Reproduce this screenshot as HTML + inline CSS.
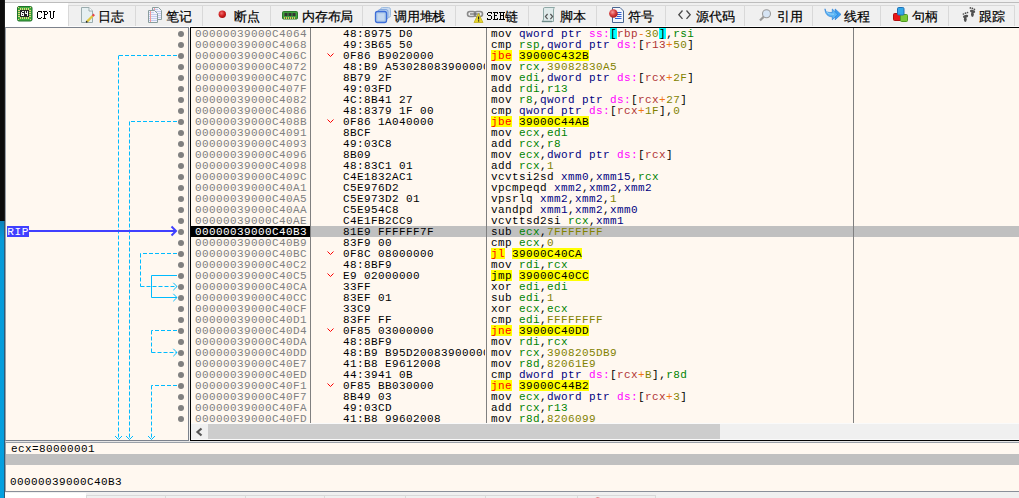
<!DOCTYPE html>
<html><head><meta charset="utf-8"><style>
*{margin:0;padding:0;box-sizing:border-box}
html,body{width:1019px;height:498px;overflow:hidden;background:#f0f0f0;position:relative;font-family:"Liberation Sans",sans-serif}
.a{position:absolute}
#strip1{position:absolute;left:0;top:0;width:5px;height:221px;background:#0c0c0c;border-right:1px solid #1c1c1c}
#strip2{position:absolute;left:0;top:221px;width:5px;height:277px;background:linear-gradient(#0c80b8,#069ad8 18px,#04a0e0);border-right:1px solid #2a5a78}
.tl{font-size:12.6px;line-height:14px;letter-spacing:-0.2px;color:#000;white-space:nowrap;font-weight:400;-webkit-text-stroke:0.2px #000}
.tab{position:absolute;top:3px;height:24px;background:#f0f0f0;border-right:1px solid #d9d9d9;font-size:12px;color:#000;white-space:nowrap}
.tab.act{background:#fff}
.tab span{position:absolute;top:5px;line-height:14px}
#side{position:absolute;left:5px;top:27px;width:184px;height:414px;background:#fff8f0;border:1px solid #7c828c;border-left-color:#9aa0a8}
#dis{position:absolute;left:190px;top:27px;width:829px;height:414px;background:#fff8f0;border-top:1px solid #000;border-left:1px solid #000;border-bottom:1px solid #000}
.mono{font-family:"Liberation Mono",monospace;font-size:11px;line-height:11px;letter-spacing:0.4px}
.addr,.byt,.dis{position:absolute;height:11px;font-family:"Liberation Mono",monospace;font-size:11px;line-height:11px;letter-spacing:0.4px;white-space:pre}
.addr{left:195px;color:#808080}
.addr.cip{left:191px;width:119px;padding-left:4px;background:#000;color:#fff}
.byt{left:343px;color:#000;width:142px;clip-path:inset(-4px 0 -4px 0)}
.dis{left:491px;color:#000}
.sel{position:absolute;left:191px;width:828px;height:11px;background:#c0c0c0}
.chev{position:absolute;left:326px}
.dot{position:absolute;left:178.4px;width:6px;height:6px;border-radius:50%;background:#808080}
.colsep{position:absolute;top:28px;width:1px;height:395px;background:#808080}
.m{color:#000} .s{color:#000080} .g{color:#ff00ff} .sb{color:#000} .k{color:#000}
.b{color:#b03434} .o{color:#f27711} .v{color:#828200} .c{color:#000} .r{color:#008300} .x{color:#000080}
.cj{color:#ff0000} .uj{color:#000} .ja{color:#000} .hl{position:absolute;height:11px}
#hscroll{position:absolute;left:191px;top:423px;width:828px;height:17px;background:#f0f0f0;border-top:1px solid #fafafa;border-bottom:1px solid #fafafa}
#thumb{position:absolute;left:17px;top:0;width:512px;height:15px;background:#cdcdcd}
#info1{position:absolute;left:5px;top:441px;width:1014px;height:50px;background:#fff8f0;border-left:1px solid #9aa0a8;border-top:1px solid #e6e6e6}
#info1line{position:absolute;left:5px;top:442px;width:1014px;height:1px;background:#9aa0a8}
#band{position:absolute;left:6px;top:454px;width:1013px;height:11px;background:#c0c0c0}
#botline{position:absolute;left:5px;top:491px;width:1014px;height:1px;background:#8a8f99}
</style></head><body>
<div id="strip1"></div><div id="strip2"></div>
<div class="a" style="left:5px;top:2px;width:1014px;height:1px;background:#bdbdbd"></div><div class="a" style="left:5px;top:3px;width:63px;height:24px;background:#fff"></div><div class="a" style="left:68px;top:5px;width:68px;height:21px;background:#f0f0f0;border:1px solid #d9d9d9;border-bottom:0"></div><div class="a" style="left:135px;top:5px;width:68px;height:21px;background:#f0f0f0;border:1px solid #d9d9d9;border-bottom:0"></div><div class="a" style="left:202px;top:5px;width:69px;height:21px;background:#f0f0f0;border:1px solid #d9d9d9;border-bottom:0"></div><div class="a" style="left:270px;top:5px;width:93px;height:21px;background:#f0f0f0;border:1px solid #d9d9d9;border-bottom:0"></div><div class="a" style="left:362px;top:5px;width:94px;height:21px;background:#f0f0f0;border:1px solid #d9d9d9;border-bottom:0"></div><div class="a" style="left:455px;top:5px;width:74px;height:21px;background:#f0f0f0;border:1px solid #d9d9d9;border-bottom:0"></div><div class="a" style="left:528px;top:5px;width:69px;height:21px;background:#f0f0f0;border:1px solid #d9d9d9;border-bottom:0"></div><div class="a" style="left:596px;top:5px;width:70px;height:21px;background:#f0f0f0;border:1px solid #d9d9d9;border-bottom:0"></div><div class="a" style="left:665px;top:5px;width:80px;height:21px;background:#f0f0f0;border:1px solid #d9d9d9;border-bottom:0"></div><div class="a" style="left:744px;top:5px;width:69px;height:21px;background:#f0f0f0;border:1px solid #d9d9d9;border-bottom:0"></div><div class="a" style="left:812px;top:5px;width:69px;height:21px;background:#f0f0f0;border:1px solid #d9d9d9;border-bottom:0"></div><div class="a" style="left:880px;top:5px;width:69px;height:21px;background:#f0f0f0;border:1px solid #d9d9d9;border-bottom:0"></div><div class="a" style="left:948px;top:5px;width:67px;height:21px;background:#f0f0f0;border:1px solid #d9d9d9;border-bottom:0"></div><div class="a" style="left:68px;top:26px;width:951px;height:1px;background:#fcfcfc"></div><div class="a tl" style="left:98px;top:10px">日志</div><div class="a tl" style="left:166px;top:10px">笔记</div><div class="a tl" style="left:234px;top:10px">断点</div><div class="a tl" style="left:302px;top:10px">内存布局</div><div class="a tl" style="left:394px;top:10px">调用堆栈</div><div class="a tl" style="left:505px;top:10px">链</div><div class="a tl" style="left:560px;top:10px">脚本</div><div class="a tl" style="left:628px;top:10px">符号</div><div class="a tl" style="left:696px;top:10px">源代码</div><div class="a tl" style="left:777px;top:10px">引用</div><div class="a tl" style="left:844px;top:10px">线程</div><div class="a tl" style="left:912px;top:10px">句柄</div><div class="a tl" style="left:979px;top:10px">跟踪</div>
<svg class="a" style="left:0;top:0" width="1019" height="27">
<!-- CPU chip -->
<g transform="translate(17,6)">
 <rect x="0.5" y="0.5" width="14.5" height="14.5" rx="1.5" fill="#3fae3f" stroke="#22702a"/>
 <g fill="#e6d27e" shape-rendering="crispEdges">
  <rect x="3" y="2" width="1" height="2"/><rect x="5" y="2" width="1" height="2"/><rect x="7" y="2" width="1" height="2"/><rect x="9" y="2" width="1" height="2"/><rect x="11" y="2" width="1" height="2"/>
  <rect x="3" y="11" width="1" height="2"/><rect x="5" y="11" width="1" height="2"/><rect x="7" y="11" width="1" height="2"/><rect x="9" y="11" width="1" height="2"/><rect x="11" y="11" width="1" height="2"/>
  <rect x="1" y="4" width="2" height="1"/><rect x="1" y="6" width="2" height="1"/><rect x="1" y="8" width="2" height="1"/><rect x="1" y="10" width="2" height="1"/>
  <rect x="12" y="4" width="2" height="1"/><rect x="12" y="6" width="2" height="1"/><rect x="12" y="8" width="2" height="1"/><rect x="12" y="10" width="2" height="1"/>
  <rect x="1" y="1" width="1" height="1"/><rect x="13" y="1" width="1" height="1"/><rect x="1" y="13" width="1" height="1"/><rect x="13" y="13" width="1" height="1"/>
 </g>
 <rect x="3" y="4" width="9" height="7" fill="#222" shape-rendering="crispEdges"/>
 <g fill="#f4f4f4" shape-rendering="crispEdges">
  <rect x="5" y="5" width="2" height="1"/><rect x="4" y="6" width="1" height="4"/><rect x="5" y="7" width="2" height="1"/><rect x="6" y="8" width="1" height="2"/><rect x="5" y="9" width="1" height="1"/>
  <rect x="8" y="5" width="1" height="3"/><rect x="10" y="5" width="1" height="5"/><rect x="9" y="7" width="1" height="1"/>
 </g>
</g>
<!-- log: document + pencil -->
<g transform="translate(80,7)">
 <path d="M1.5 0.5 H9 L12.5 4 V15.5 H1.5 Z" fill="#e6f0f2" stroke="#9aacae"/>
 <path d="M9 0.5 V4 H12.5" fill="#fff" stroke="#9aacae"/>
 <path d="M7 14.6 L12.6 9" stroke="#e0c840" stroke-width="2.3"/>
 <path d="M12.6 9 L14.2 7.4" stroke="#e84848" stroke-width="2.3"/>
 <path d="M6.2 15.4 L7.2 14.4" stroke="#222" stroke-width="1.6"/>
</g>
<!-- notes: two docs -->
<g transform="translate(148,7)">
 <path d="M4.5 0.5 H10.5 L13.5 3.5 V12.5 H4.5 Z" fill="#f2f4fc" stroke="#8a9e9e"/>
 <g stroke="#c4ccee" stroke-width="1"><path d="M5 2.5 H10 M5 4.5 H13 M9 6.5 H13 M9 8.5 H13 M9 10.5 H13"/></g>
 <path d="M6.5 1 V4" stroke="#f0a0a0"/>
 <path d="M0.5 3.5 H6.5 L9.5 6.5 V15.5 H0.5 Z" fill="#f2f4fc" stroke="#8a9e9e"/>
 <g stroke="#c4ccee" stroke-width="1"><path d="M1 5.5 H6 M1 7.5 H9 M1 9.5 H9 M1 11.5 H9 M1 13.5 H9"/></g>
 <path d="M2.5 4 V15" stroke="#f09898"/>
</g>
<!-- breakpoint dot -->
<defs><radialGradient id="rb2" cx="0.4" cy="0.35" r="0.7"><stop offset="0" stop-color="#f07070"/><stop offset="0.55" stop-color="#d02020"/><stop offset="1" stop-color="#a01010"/></radialGradient></defs><circle cx="222.3" cy="14.3" r="3.7" fill="url(#rb2)"/>
<!-- memory map RAM -->
<g transform="translate(282,11)">
 <rect x="0.5" y="0.5" width="15" height="7.5" rx="1" fill="#3f9f3f" stroke="#2b7a2b"/>
 <rect x="2.5" y="2" width="3" height="3" fill="#333"/><rect x="6.5" y="2" width="3" height="3" fill="#333"/><rect x="10.5" y="2" width="3" height="3" fill="#333"/>
 <g fill="#e0c060"><rect x="2" y="6" width="1" height="2"/><rect x="4" y="6" width="1" height="2"/><rect x="6" y="6" width="1" height="2"/><rect x="8" y="6" width="1" height="2"/><rect x="10" y="6" width="1" height="2"/><rect x="12" y="6" width="1" height="2"/></g>
</g>
<!-- call stack -->
<g transform="translate(375,7)">
 <rect x="5.5" y="0.5" width="10" height="10" rx="2" fill="#c8daf0" stroke="#9fbde0"/>
 <rect x="3" y="2.5" width="10" height="10" rx="2" fill="#b8d0ec" stroke="#86aade"/>
 <rect x="0.5" y="4.5" width="11" height="11" rx="2" fill="#a8c6e8" stroke="#3e6ed8" stroke-width="1.3"/>
 <rect x="2.5" y="6.5" width="7" height="7" fill="#c4d8f0"/>
</g>
<!-- SEH chain -->
<g transform="translate(467,10)">
 <rect x="0.5" y="1.5" width="8" height="5" rx="2.5" fill="none" stroke="#8a8a8a" stroke-width="1.6"/>
 <rect x="7.5" y="1.5" width="8" height="5" rx="2.5" fill="none" stroke="#8a8a8a" stroke-width="1.6"/>
 <path d="M3 4 H13" stroke="#6a6a6a" stroke-width="1.2"/>
 <path d="M11.5 3.5 L16 12.5 H7 Z" fill="#e6d62c" stroke="#c0b020" stroke-width="0.8"/>
 <rect x="11" y="6.5" width="1.2" height="3" fill="#222"/><rect x="11" y="10.3" width="1.2" height="1.2" fill="#222"/>
</g>
<!-- script scroll -->
<g transform="translate(541,7)">
 <path d="M3.5 0.5 H13.5 Q12.5 1.5 12.5 3 V14.5 H1 Q2.5 13.5 2.5 12 V2 Q2.5 0.5 3.5 0.5 Z" fill="#dfeaea" stroke="#8ea8a6"/>
 <path d="M1 14.5 H11" stroke="#6e8c8a" stroke-width="1.4"/>
 <path d="M6.6 7 L4.4 9.6 L6.6 12.2 M9.4 7 L11.6 9.6 L9.4 12.2" fill="none" stroke="#555" stroke-width="1.2"/>
</g>
<!-- symbols -->
<g transform="translate(609,7)">
 <path d="M3.5 0.5 H11 L14.5 4 V15.5 H3.5 Z" fill="#f2f6fc" stroke="#4a6690"/>
 <g stroke="#3060d0"><path d="M8 5.5 H12.5 M8 7.5 H12.5 M8 9.5 H12.5 M6 11.5 H12.5"/></g>
 <defs><radialGradient id="rb" cx="0.4" cy="0.35" r="0.7"><stop offset="0" stop-color="#f8a0a0"/><stop offset="0.5" stop-color="#d84040"/><stop offset="1" stop-color="#a01818"/></radialGradient></defs><circle cx="4.4" cy="6.5" r="4.3" fill="url(#rb)"/>
</g>
<!-- source <> -->
<g transform="translate(678,10)">
 <path d="M4.5 0.5 L0.8 4.7 L4.5 8.9 M8.5 0.5 L12.2 4.7 L8.5 8.9" fill="none" stroke="#4a4a4a" stroke-width="1.3"/>
</g>
<!-- references magnifier -->
<g transform="translate(759,9)">
 <circle cx="7.5" cy="4.8" r="4" fill="#d6e4f4" stroke="#9a9a9a" stroke-width="1.1"/>
 <path d="M1 11.5 L4.6 7.9" stroke="#9a9a9a" stroke-width="2.2"/>
</g>
<!-- threads -->
<g>
 <path d="M835.2 9 L841 14.4 L835.2 19.8 Z" fill="#3c9ef0" stroke="#2a80d8" stroke-width="0.7" stroke-linejoin="round"/>
 <path d="M825 8.8 C825.5 12.5 828.5 12.6 832.3 12.4 L832.3 9 L837.8 14.4 L832.3 19.8 L832.3 16.8 C828 16.8 825 14 825 8.8 Z" fill="#5ab4f4" stroke="#2a80d8" stroke-width="0.7" stroke-linejoin="round"/>
 <path d="M826.5 11.5 C828 14 830 14.2 834 14.2" stroke="#9ad4fa" stroke-width="1" fill="none"/>
</g>
<!-- handles -->
<g transform="translate(893,7)">
 <rect x="0.5" y="6.5" width="7.5" height="7" rx="1" fill="#e81818" stroke="#b01010"/>
 <rect x="7.5" y="7.5" width="7" height="7" rx="1" fill="#78c838" stroke="#4e9a20"/>
 <rect x="4.5" y="0.5" width="6.5" height="7.5" rx="1.2" fill="#34a8e8" stroke="#1e70b8"/>
</g>
<!-- trace footprints -->
<g fill="#505050">
 <ellipse cx="972.6" cy="11.4" rx="2.7" ry="1.5" transform="rotate(12 972.6 11.4)"/>
 <ellipse cx="972.4" cy="14.3" rx="1.4" ry="2.6"/>
 <circle cx="970.4" cy="7.9" r="0.85"/><circle cx="972.4" cy="8.4" r="0.85"/><circle cx="974.4" cy="9.4" r="0.85"/>
 <ellipse cx="965.6" cy="16.4" rx="2.7" ry="1.5" transform="rotate(-12 965.6 16.4)"/>
 <ellipse cx="965.3" cy="19.3" rx="1.4" ry="2.6"/>
 <circle cx="963.4" cy="14" r="0.85"/><circle cx="965.5" cy="13.2" r="0.85"/><circle cx="967.5" cy="12.5" r="0.85"/>
</g>
</svg>

<svg class="a" style="left:0;top:0" width="1019" height="27" shape-rendering="crispEdges"><g fill="#000">
<rect x="38" y="11" width="3" height="1"/><rect x="41" y="11" width="1" height="2"/><rect x="37" y="12" width="1" height="6"/><rect x="38" y="18" width="3" height="1"/><rect x="41" y="17" width="1" height="1"/>
<rect x="43" y="11" width="4" height="1"/><rect x="44" y="11" width="1" height="8"/><rect x="47" y="12" width="1" height="2"/><rect x="45" y="14" width="2" height="1"/><rect x="43" y="18" width="3" height="1"/>
<rect x="49" y="11" width="2" height="1"/><rect x="50" y="11" width="1" height="7"/><rect x="51" y="18" width="2" height="1"/><rect x="53" y="11" width="1" height="7"/><rect x="53" y="11" width="2" height="1"/>
<rect x="488" y="12" width="3" height="1"/><rect x="491" y="12" width="1" height="2"/><rect x="487" y="13" width="1" height="2"/><rect x="488" y="15" width="1" height="1"/><rect x="489" y="15" width="2" height="1"/><rect x="491" y="16" width="1" height="3"/><rect x="488" y="19" width="3" height="1"/><rect x="487" y="18" width="1" height="2"/>
<rect x="493" y="12" width="5" height="1"/><rect x="494" y="12" width="1" height="8"/><rect x="495" y="15" width="2" height="1"/><rect x="493" y="19" width="5" height="1"/><rect x="497" y="13" width="1" height="1"/><rect x="497" y="18" width="1" height="1"/>
<rect x="499" y="12" width="3" height="1"/><rect x="500" y="12" width="1" height="8"/><rect x="499" y="19" width="3" height="1"/><rect x="502" y="12" width="3" height="1"/><rect x="503" y="12" width="1" height="8"/><rect x="502" y="19" width="3" height="1"/><rect x="501" y="15" width="2" height="1"/>
</g></svg>

<div id="side"></div>
<div id="dis"></div>
<div class="addr" style="top:29px">00000039000C4064</div><div class="byt" style="top:29px">48:8975 D0</div><div class="hl" style="left:610px;top:28px;width:7px;background:#00ffff"></div><div class="hl" style="left:659px;top:28px;width:7px;background:#00ffff"></div><div class="dis" style="top:28px;padding-top:1px"><span class="m">mov </span><span class="s">qword ptr </span><span class="g">ss:</span><span class="sb">[</span><span class="b">rbp</span><span class="o">-</span><span class="v">30</span><span class="sb">]</span><span class="c">,</span><span class="r">rsi</span></div><div class="dot" style="top:30.8px"></div><div class="addr" style="top:40px">00000039000C4068</div><div class="byt" style="top:40px">49:3B65 50</div><div class="dis" style="top:39px;padding-top:1px"><span class="m">cmp </span><span class="r">rsp</span><span class="c">,</span><span class="s">qword ptr </span><span class="g">ds:</span><span class="k">[</span><span class="b">r13</span><span class="o">+</span><span class="v">50</span><span class="k">]</span></div><div class="dot" style="top:41.8px"></div><div class="addr" style="top:51px">00000039000C406C</div><svg class="chev" style="top:50px" width="9" height="11"><path d="M1.5 3.5 L4.5 6.5 L7.5 3.5" fill="none" stroke="#ff0000" stroke-width="1"/></svg><div class="byt" style="top:51px">0F86 B9020000</div><div class="hl" style="left:491px;top:50px;width:21px;background:#ffff00"></div><div class="hl" style="left:519px;top:50px;width:70px;background:#ffff00"></div><div class="dis" style="top:50px;padding-top:1px"><span class="cj">jbe</span><span class="t"> </span><span class="ja">39000C432B</span></div><div class="dot" style="top:52.8px"></div><div class="addr" style="top:62px">00000039000C4072</div><div class="byt" style="top:62px">48:B9 A530280839000000</div><div class="dis" style="top:61px;padding-top:1px"><span class="m">mov </span><span class="r">rcx</span><span class="c">,</span><span class="v">39082830A5</span></div><div class="dot" style="top:63.8px"></div><div class="addr" style="top:73px">00000039000C407C</div><div class="byt" style="top:73px">8B79 2F</div><div class="dis" style="top:72px;padding-top:1px"><span class="m">mov </span><span class="r">edi</span><span class="c">,</span><span class="s">dword ptr </span><span class="g">ds:</span><span class="k">[</span><span class="b">rcx</span><span class="o">+</span><span class="v">2F</span><span class="k">]</span></div><div class="dot" style="top:74.8px"></div><div class="addr" style="top:84px">00000039000C407F</div><div class="byt" style="top:84px">49:03FD</div><div class="dis" style="top:83px;padding-top:1px"><span class="m">add </span><span class="r">rdi</span><span class="c">,</span><span class="r">r13</span></div><div class="dot" style="top:85.8px"></div><div class="addr" style="top:95px">00000039000C4082</div><div class="byt" style="top:95px">4C:8B41 27</div><div class="dis" style="top:94px;padding-top:1px"><span class="m">mov </span><span class="r">r8</span><span class="c">,</span><span class="s">qword ptr </span><span class="g">ds:</span><span class="k">[</span><span class="b">rcx</span><span class="o">+</span><span class="v">27</span><span class="k">]</span></div><div class="dot" style="top:96.8px"></div><div class="addr" style="top:106px">00000039000C4086</div><div class="byt" style="top:106px">48:8379 1F 00</div><div class="dis" style="top:105px;padding-top:1px"><span class="m">cmp </span><span class="s">qword ptr </span><span class="g">ds:</span><span class="k">[</span><span class="b">rcx</span><span class="o">+</span><span class="v">1F</span><span class="k">]</span><span class="c">,</span><span class="v">0</span></div><div class="dot" style="top:107.8px"></div><div class="addr" style="top:117px">00000039000C408B</div><svg class="chev" style="top:116px" width="9" height="11"><path d="M1.5 3.5 L4.5 6.5 L7.5 3.5" fill="none" stroke="#ff0000" stroke-width="1"/></svg><div class="byt" style="top:117px">0F86 1A040000</div><div class="hl" style="left:491px;top:116px;width:21px;background:#ffff00"></div><div class="hl" style="left:519px;top:116px;width:70px;background:#ffff00"></div><div class="dis" style="top:116px;padding-top:1px"><span class="cj">jbe</span><span class="t"> </span><span class="ja">39000C44AB</span></div><div class="dot" style="top:118.8px"></div><div class="addr" style="top:128px">00000039000C4091</div><div class="byt" style="top:128px">8BCF</div><div class="dis" style="top:127px;padding-top:1px"><span class="m">mov </span><span class="r">ecx</span><span class="c">,</span><span class="r">edi</span></div><div class="dot" style="top:129.8px"></div><div class="addr" style="top:139px">00000039000C4093</div><div class="byt" style="top:139px">49:03C8</div><div class="dis" style="top:138px;padding-top:1px"><span class="m">add </span><span class="r">rcx</span><span class="c">,</span><span class="r">r8</span></div><div class="dot" style="top:140.8px"></div><div class="addr" style="top:150px">00000039000C4096</div><div class="byt" style="top:150px">8B09</div><div class="dis" style="top:149px;padding-top:1px"><span class="m">mov </span><span class="r">ecx</span><span class="c">,</span><span class="s">dword ptr </span><span class="g">ds:</span><span class="k">[</span><span class="b">rcx</span><span class="k">]</span></div><div class="dot" style="top:151.8px"></div><div class="addr" style="top:161px">00000039000C4098</div><div class="byt" style="top:161px">48:83C1 01</div><div class="dis" style="top:160px;padding-top:1px"><span class="m">add </span><span class="r">rcx</span><span class="c">,</span><span class="v">1</span></div><div class="dot" style="top:162.8px"></div><div class="addr" style="top:172px">00000039000C409C</div><div class="byt" style="top:172px">C4E1832AC1</div><div class="dis" style="top:171px;padding-top:1px"><span class="m">vcvtsi2sd </span><span class="x">xmm0</span><span class="c">,</span><span class="x">xmm15</span><span class="c">,</span><span class="r">rcx</span></div><div class="dot" style="top:173.8px"></div><div class="addr" style="top:183px">00000039000C40A1</div><div class="byt" style="top:183px">C5E976D2</div><div class="dis" style="top:182px;padding-top:1px"><span class="m">vpcmpeqd </span><span class="x">xmm2</span><span class="c">,</span><span class="x">xmm2</span><span class="c">,</span><span class="x">xmm2</span></div><div class="dot" style="top:184.8px"></div><div class="addr" style="top:194px">00000039000C40A5</div><div class="byt" style="top:194px">C5E973D2 01</div><div class="dis" style="top:193px;padding-top:1px"><span class="m">vpsrlq </span><span class="x">xmm2</span><span class="c">,</span><span class="x">xmm2</span><span class="c">,</span><span class="v">1</span></div><div class="dot" style="top:195.8px"></div><div class="addr" style="top:205px">00000039000C40AA</div><div class="byt" style="top:205px">C5E954C8</div><div class="dis" style="top:204px;padding-top:1px"><span class="m">vandpd </span><span class="x">xmm1</span><span class="c">,</span><span class="x">xmm2</span><span class="c">,</span><span class="x">xmm0</span></div><div class="dot" style="top:206.8px"></div><div class="addr" style="top:216px">00000039000C40AE</div><div class="byt" style="top:216px">C4E1FB2CC9</div><div class="dis" style="top:215px;padding-top:1px"><span class="m">vcvttsd2si </span><span class="r">rcx</span><span class="c">,</span><span class="x">xmm1</span></div><div class="dot" style="top:217.8px"></div><div class="sel" style="top:226px"></div><div class="addr cip" style="top:226px;padding-top:1px">00000039000C40B3</div><div class="byt" style="top:227px">81E9 FFFFFF7F</div><div class="dis" style="top:226px;padding-top:1px"><span class="m">sub </span><span class="r">ecx</span><span class="c">,</span><span class="v">7FFFFFFF</span></div><div class="dot" style="top:228.8px"></div><div class="addr" style="top:238px">00000039000C40B9</div><div class="byt" style="top:238px">83F9 00</div><div class="dis" style="top:237px;padding-top:1px"><span class="m">cmp </span><span class="r">ecx</span><span class="c">,</span><span class="v">0</span></div><div class="dot" style="top:239.8px"></div><div class="addr" style="top:249px">00000039000C40BC</div><svg class="chev" style="top:248px" width="9" height="11"><path d="M1.5 3.5 L4.5 6.5 L7.5 3.5" fill="none" stroke="#ff0000" stroke-width="1"/></svg><div class="byt" style="top:249px">0F8C 08000000</div><div class="hl" style="left:491px;top:248px;width:14px;background:#ffff00"></div><div class="hl" style="left:512px;top:248px;width:70px;background:#ffff00"></div><div class="dis" style="top:248px;padding-top:1px"><span class="cj">jl</span><span class="t"> </span><span class="ja">39000C40CA</span></div><div class="dot" style="top:250.8px"></div><div class="addr" style="top:260px">00000039000C40C2</div><div class="byt" style="top:260px">48:8BF9</div><div class="dis" style="top:259px;padding-top:1px"><span class="m">mov </span><span class="r">rdi</span><span class="c">,</span><span class="r">rcx</span></div><div class="dot" style="top:261.8px"></div><div class="addr" style="top:271px">00000039000C40C5</div><svg class="chev" style="top:270px" width="9" height="11"><path d="M1.5 3.5 L4.5 6.5 L7.5 3.5" fill="none" stroke="#ff0000" stroke-width="1"/></svg><div class="byt" style="top:271px">E9 02000000</div><div class="hl" style="left:491px;top:270px;width:21px;background:#ffff00"></div><div class="hl" style="left:519px;top:270px;width:70px;background:#ffff00"></div><div class="dis" style="top:270px;padding-top:1px"><span class="uj">jmp</span><span class="ja"> 39000C40CC</span></div><div class="dot" style="top:272.8px"></div><div class="addr" style="top:282px">00000039000C40CA</div><div class="byt" style="top:282px">33FF</div><div class="dis" style="top:281px;padding-top:1px"><span class="m">xor </span><span class="r">edi</span><span class="c">,</span><span class="r">edi</span></div><div class="dot" style="top:283.8px"></div><div class="addr" style="top:293px">00000039000C40CC</div><div class="byt" style="top:293px">83EF 01</div><div class="dis" style="top:292px;padding-top:1px"><span class="m">sub </span><span class="r">edi</span><span class="c">,</span><span class="v">1</span></div><div class="dot" style="top:294.8px"></div><div class="addr" style="top:304px">00000039000C40CF</div><div class="byt" style="top:304px">33C9</div><div class="dis" style="top:303px;padding-top:1px"><span class="m">xor </span><span class="r">ecx</span><span class="c">,</span><span class="r">ecx</span></div><div class="dot" style="top:305.8px"></div><div class="addr" style="top:315px">00000039000C40D1</div><div class="byt" style="top:315px">83FF FF</div><div class="dis" style="top:314px;padding-top:1px"><span class="m">cmp </span><span class="r">edi</span><span class="c">,</span><span class="v">FFFFFFFF</span></div><div class="dot" style="top:316.8px"></div><div class="addr" style="top:326px">00000039000C40D4</div><svg class="chev" style="top:325px" width="9" height="11"><path d="M1.5 3.5 L4.5 6.5 L7.5 3.5" fill="none" stroke="#ff0000" stroke-width="1"/></svg><div class="byt" style="top:326px">0F85 03000000</div><div class="hl" style="left:491px;top:325px;width:21px;background:#ffff00"></div><div class="hl" style="left:519px;top:325px;width:70px;background:#ffff00"></div><div class="dis" style="top:325px;padding-top:1px"><span class="cj">jne</span><span class="t"> </span><span class="ja">39000C40DD</span></div><div class="dot" style="top:327.8px"></div><div class="addr" style="top:337px">00000039000C40DA</div><div class="byt" style="top:337px">48:8BF9</div><div class="dis" style="top:336px;padding-top:1px"><span class="m">mov </span><span class="r">rdi</span><span class="c">,</span><span class="r">rcx</span></div><div class="dot" style="top:338.8px"></div><div class="addr" style="top:348px">00000039000C40DD</div><div class="byt" style="top:348px">48:B9 B95D200839000000</div><div class="dis" style="top:347px;padding-top:1px"><span class="m">mov </span><span class="r">rcx</span><span class="c">,</span><span class="v">3908205DB9</span></div><div class="dot" style="top:349.8px"></div><div class="addr" style="top:359px">00000039000C40E7</div><div class="byt" style="top:359px">41:B8 E9612008</div><div class="dis" style="top:358px;padding-top:1px"><span class="m">mov </span><span class="r">r8d</span><span class="c">,</span><span class="v">82061E9</span></div><div class="dot" style="top:360.8px"></div><div class="addr" style="top:370px">00000039000C40ED</div><div class="byt" style="top:370px">44:3941 0B</div><div class="dis" style="top:369px;padding-top:1px"><span class="m">cmp </span><span class="s">dword ptr </span><span class="g">ds:</span><span class="k">[</span><span class="b">rcx</span><span class="o">+</span><span class="v">B</span><span class="k">]</span><span class="c">,</span><span class="r">r8d</span></div><div class="dot" style="top:371.8px"></div><div class="addr" style="top:381px">00000039000C40F1</div><svg class="chev" style="top:380px" width="9" height="11"><path d="M1.5 3.5 L4.5 6.5 L7.5 3.5" fill="none" stroke="#ff0000" stroke-width="1"/></svg><div class="byt" style="top:381px">0F85 BB030000</div><div class="hl" style="left:491px;top:380px;width:21px;background:#ffff00"></div><div class="hl" style="left:519px;top:380px;width:70px;background:#ffff00"></div><div class="dis" style="top:380px;padding-top:1px"><span class="cj">jne</span><span class="t"> </span><span class="ja">39000C44B2</span></div><div class="dot" style="top:382.8px"></div><div class="addr" style="top:392px">00000039000C40F7</div><div class="byt" style="top:392px">8B49 03</div><div class="dis" style="top:391px;padding-top:1px"><span class="m">mov </span><span class="r">ecx</span><span class="c">,</span><span class="s">dword ptr </span><span class="g">ds:</span><span class="k">[</span><span class="b">rcx</span><span class="o">+</span><span class="v">3</span><span class="k">]</span></div><div class="dot" style="top:393.8px"></div><div class="addr" style="top:403px">00000039000C40FA</div><div class="byt" style="top:403px">49:03CD</div><div class="dis" style="top:402px;padding-top:1px"><span class="m">add </span><span class="r">rcx</span><span class="c">,</span><span class="r">r13</span></div><div class="dot" style="top:404.8px"></div><div class="addr" style="top:414px">00000039000C40FD</div><div class="byt" style="top:414px">41:B8 99602008</div><div class="dis" style="top:413px;padding-top:1px"><span class="m">mov </span><span class="r">r8d</span><span class="c">,</span><span class="v">8206099</span></div><div class="dot" style="top:415.8px"></div>
<div class="colsep" style="left:310px"></div>
<div class="colsep" style="left:486px"></div>
<div class="colsep" style="left:853px"></div>
<div id="hscroll"><svg style="position:absolute;left:0;top:0" width="17" height="17"><path d="M10.5 4.5 L6.5 8 L10.5 11.5" fill="none" stroke="#555" stroke-width="2.2"/></svg><div id="thumb"></div></div>
<div id="info1"></div><div id="info1line"></div>
<div id="band"></div>
<div class="addr" style="left:11px;top:444px;color:#000">ecx=80000001</div>
<div class="addr" style="left:10px;top:477px;color:#000">00000039000C40B3</div>
<div id="botline"></div>
<svg class="a" style="left:0;top:0" width="1019" height="498"><path d="M177 55.5 H118.5" stroke="#00bbff" stroke-width="1" fill="none" stroke-dasharray="4 2"/><path d="M118.5 55.5 V439" stroke="#00bbff" stroke-width="1" fill="none" stroke-dasharray="4 2"/><path d="M115.0 436.0 L118.5 439.5 L122.0 436.0" stroke="#00bbff" stroke-width="1" fill="none"/><path d="M177 121.5 H129.5" stroke="#00bbff" stroke-width="1" fill="none" stroke-dasharray="4 2"/><path d="M129.5 121.5 V439" stroke="#00bbff" stroke-width="1" fill="none" stroke-dasharray="4 2"/><path d="M126.0 436.0 L129.5 439.5 L133.0 436.0" stroke="#00bbff" stroke-width="1" fill="none"/><path d="M177 253.5 H140.5" stroke="#00bbff" stroke-width="1" fill="none" stroke-dasharray="4 2"/><path d="M140.5 253.5 V286.5" stroke="#00bbff" stroke-width="1" fill="none" stroke-dasharray="4 2"/><path d="M140.5 286.5 H177" stroke="#00bbff" stroke-width="1" fill="none" stroke-dasharray="4 2"/><path d="M173.3 282.8 L177 286.5 L173.3 290.2" stroke="#00bbff" stroke-width="1" fill="none"/><path d="M177 275.5 H151.5" stroke="#00bbff" stroke-width="1" fill="none" /><path d="M151.5 275.5 V297.5" stroke="#00bbff" stroke-width="1" fill="none" /><path d="M151.5 297.5 H177" stroke="#00bbff" stroke-width="1" fill="none" /><path d="M173.3 293.8 L177 297.5 L173.3 301.2" stroke="#00bbff" stroke-width="1" fill="none"/><path d="M177 330.5 H151.5" stroke="#00bbff" stroke-width="1" fill="none" stroke-dasharray="4 2"/><path d="M151.5 330.5 V352.5" stroke="#00bbff" stroke-width="1" fill="none" stroke-dasharray="4 2"/><path d="M151.5 352.5 H177" stroke="#00bbff" stroke-width="1" fill="none" stroke-dasharray="4 2"/><path d="M173.3 348.8 L177 352.5 L173.3 356.2" stroke="#00bbff" stroke-width="1" fill="none"/><path d="M177 385.5 H151.5" stroke="#00bbff" stroke-width="1" fill="none" stroke-dasharray="4 2"/><path d="M151.5 385.5 V439" stroke="#00bbff" stroke-width="1" fill="none" stroke-dasharray="4 2"/><path d="M148.0 436.0 L151.5 439.5 L155.0 436.0" stroke="#00bbff" stroke-width="1" fill="none"/><rect x="7" y="226" width="22" height="11" fill="#4040ff"/><path d="M29 231 H176" stroke="#4040ff" stroke-width="2" fill="none"/><path d="M171.5 226.5 L176 231 L171.5 235.5" stroke="#4040ff" stroke-width="2" fill="none"/><text x="7.3" y="235" font-family="Liberation Mono" font-size="11" letter-spacing="0.6" fill="#fff">RIP</text></svg>
<div class="a" style="left:5px;top:493px;width:81px;height:5px;background:#fff"></div><div class="a" style="left:86px;top:495px;width:80px;height:3px;background:#f0f0f0;border:1px solid #d9d9d9;border-bottom:0"></div><div class="a" style="left:165px;top:495px;width:81px;height:3px;background:#f0f0f0;border:1px solid #d9d9d9;border-bottom:0"></div><div class="a" style="left:245px;top:495px;width:80px;height:3px;background:#f0f0f0;border:1px solid #d9d9d9;border-bottom:0"></div><div class="a" style="left:324px;top:495px;width:82px;height:3px;background:#f0f0f0;border:1px solid #d9d9d9;border-bottom:0"></div><div class="a" style="left:405px;top:495px;width:81px;height:3px;background:#f0f0f0;border:1px solid #d9d9d9;border-bottom:0"></div><div class="a" style="left:485px;top:495px;width:93px;height:3px;background:#f0f0f0;border:1px solid #d9d9d9;border-bottom:0"></div><div class="a" style="left:577px;top:495px;width:79px;height:3px;background:#f0f0f0;border:1px solid #d9d9d9;border-bottom:0"></div><svg class="a" style="left:590px;top:490px" width="16" height="8"><circle cx="7.7" cy="11" r="3.6" fill="#d01818"/></svg>
</body></html>
